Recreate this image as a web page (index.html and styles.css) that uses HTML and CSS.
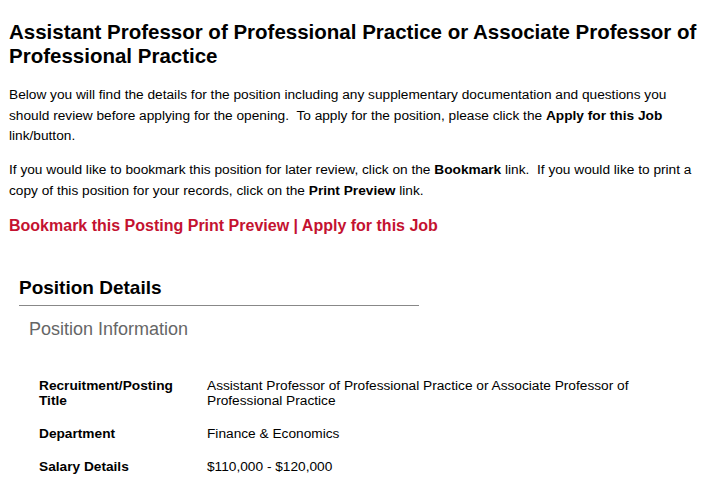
FILE: index.html
```html
<!DOCTYPE html>
<html lang="en">
<head>
<meta charset="utf-8">
<title>Assistant Professor of Professional Practice</title>
<link rel="stylesheet" href="styles.css">
</head>
<body>
<div class="posting">
  <h1 class="posting-title">Assistant Professor of Professional Practice or Associate Professor of Professional Practice</h1>
  <p class="intro">Below you will find the details for the position including any supplementary documentation and questions you should review before applying for the opening.&nbsp; To apply for the position, please click the <b>Apply for this Job</b> link/button.</p>
  <p class="intro">If you would like to bookmark this position for later review, click on the <b>Bookmark</b> link.&nbsp; If you would like to print a copy of this position for your records, click on the <b>Print Preview</b> link.</p>
  <div class="actions"><a href="#">Bookmark this Posting</a> <a href="#">Print Preview</a> | <a href="#">Apply for this Job</a></div>

  <section class="details">
    <h2 class="details-title">Position Details</h2>
    <h3 class="details-sub">Position Information</h3>
    <table class="info">
      <tr>
        <th>Recruitment/Posting Title</th>
        <td>Assistant Professor of Professional Practice or Associate Professor of Professional Practice</td>
      </tr>
      <tr>
        <th>Department</th>
        <td>Finance &amp; Economics</td>
      </tr>
      <tr>
        <th>Salary Details</th>
        <td>$110,000 - $120,000</td>
      </tr>
    </table>
  </section>
</div>
</body>
</html>
```

FILE: styles.css
```css
body {
  margin: 0;
  font-family: "Liberation Sans", Arial, sans-serif;
  color: #000;
  background: #fff;
}

.posting {
  padding: 20px 9px 0 9px;
}

.posting-title {
  font-size: 20.5px;
  line-height: 24px;
  margin: 0 0 17px 0;
}

.intro {
  font-size: 13.7px;
  line-height: 20.5px;
  margin: 0 0 13.5px 0;
}

.actions {
  font-size: 16px;
  line-height: 18px;
  font-weight: bold;
  color: #c41230;
  margin-top: 16px;
}

.actions a {
  color: #c41230;
  text-decoration: none;
}

.details {
  margin: 42px 0 0 10px;
}

.details-title {
  font-size: 19px;
  line-height: 22px;
  margin: 0;
  width: 400px;
  padding-bottom: 6px;
  border-bottom: 1px solid #888;
}

.details-sub {
  font-size: 18px;
  line-height: 21px;
  font-weight: normal;
  color: #666;
  margin: 13px 0 0 10px;
}

.info {
  border-collapse: collapse;
  margin: 38px 0 0 20px;
  font-size: 13.7px;
  line-height: 15px;
}

.info th {
  text-align: left;
  vertical-align: top;
  width: 152px;
  padding: 0 16px 18px 0;
}

.info td {
  vertical-align: top;
  padding: 0 0 18px 0;
}
```
